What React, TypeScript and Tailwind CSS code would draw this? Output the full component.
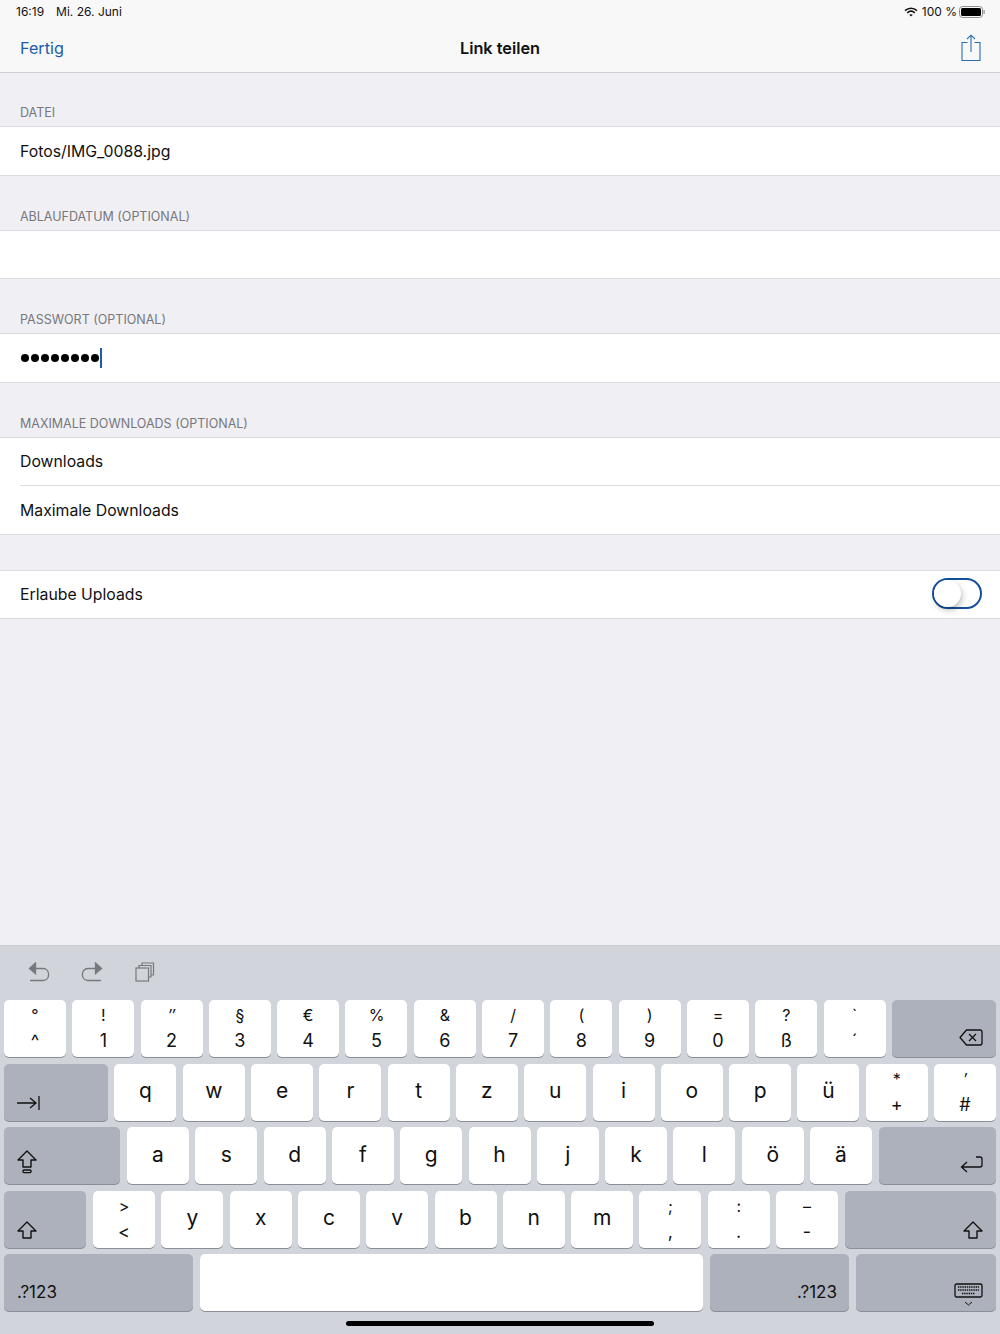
import type { ReactNode } from 'react';

type KeyDef = { top?: string; label: string; slant?: boolean };

const row1: KeyDef[] = [
  { top: '°', label: '^' },
  { top: '!', label: '1' },
  { top: '″', label: '2', slant: true },
  { top: '§', label: '3' },
  { top: '€', label: '4' },
  { top: '%', label: '5' },
  { top: '&', label: '6' },
  { top: '/', label: '7' },
  { top: '(', label: '8' },
  { top: ')', label: '9' },
  { top: '=', label: '0' },
  { top: '?', label: 'ß' },
  { top: '`', label: '´' },
];
const row2: KeyDef[] = [
  ...'qwertzuiopü'.split('').map((label) => ({ label })),
  { top: '*', label: '+' },
  { top: '′', label: '#', slant: true },
];
const row3: KeyDef[] = 'asdfghjklöä'.split('').map((label) => ({ label }));
const row4: KeyDef[] = [
  { top: '>', label: '<' },
  ...'yxcvbnm'.split('').map((label) => ({ label })),
  { top: ';', label: ',' },
  { top: ':', label: '.' },
  { top: '–', label: '-' },
];

function Key({ k }: { k: KeyDef }) {
  return (
    <div className="w-[62px] h-[57px] shrink-0 bg-white rounded-[5px] shadow-[0_1px_0_#8b8e96] text-[#111]">
      {k.top ? (
        <div className="h-full flex flex-col items-center pt-[4px]">
          <span className={`text-[16px] leading-[22px] ${k.slant ? 'italic' : ''}`}>{k.top}</span>
          <span className="text-[18px] leading-[24px] mt-[3px]">{k.label}</span>
        </div>
      ) : (
        <div className="h-full flex items-center justify-center text-[21px] leading-none pb-[3px]">{k.label}</div>
      )}
    </div>
  );
}

function SpecialKey({ width, align, children }: { width: string; align: 'left' | 'right'; children: ReactNode }) {
  return (
    <div
      className={`${width} h-[57px] shrink-0 bg-[#adb1bb] rounded-[5px] shadow-[0_1px_0_#8b8e96] flex items-end text-[#111] ${
        align === 'left' ? 'justify-start pl-[13px]' : 'justify-end pr-[13px]'
      }`}
    >
      {children}
    </div>
  );
}

function ShiftIcon({ lock }: { lock?: boolean }) {
  return (
    <svg
      width="20"
      height="24"
      viewBox="0 0 20 24"
      fill="none"
      stroke="#111"
      strokeWidth="1.4"
      className={lock ? 'mb-[10px]' : 'mb-[3px]'}
    >
      <path d="M10 1 L19 10 H14 V17 H6 V10 H1 Z" strokeLinejoin="round" />
      {lock && <rect x="6" y="20" width="8" height="2.6" rx="1" />}
    </svg>
  );
}

function Section({ title, children }: { title?: string; children: ReactNode }) {
  return (
    <div>
      {title ? (
        <div className="h-[54px] flex items-end px-5 pb-[5px] text-[12.5px] leading-[16px] text-[#77777c]">{title}</div>
      ) : (
        <div className="h-[35px]" />
      )}
      <div className="bg-white border-y border-[#dcdce0]">{children}</div>
    </div>
  );
}

function Row({ children }: { children?: ReactNode }) {
  return <div className="h-[47.5px] flex items-center px-5 text-[15.8px] text-[#111]">{children}</div>;
}

export default function App() {
  return (
    <div className="w-[1000px] h-[1334px] flex flex-col bg-[#efeff4] overflow-hidden font-['Inter','Liberation_Sans',sans-serif]">
      {/* status + nav */}
      <div className="h-[73px] shrink-0 bg-[#f8f8f9] border-b border-[#d0d0d4] relative">
        <div className="h-[24px] flex items-center justify-between pl-4 pr-[15px] text-[12px] text-[#111]">
          <div className="flex gap-[12px]">
            <span>16:19</span>
            <span>Mi. 26. Juni</span>
          </div>
          <div className="flex items-center gap-[4px]">
            <svg width="14" height="10" viewBox="0 0 14 10" fill="none" stroke="#111" strokeWidth="1.6">
              <path d="M1 3.6 C4.5 0.4 9.5 0.4 13 3.6" />
              <path d="M3.2 5.8 C5.4 3.9 8.6 3.9 10.8 5.8" />
              <path d="M7 9.6 L5.2 7.8 C6.2 7 7.8 7 8.8 7.8 Z" fill="#111" stroke="none" />
            </svg>
            <span>100 %</span>
            <svg width="26" height="12" viewBox="0 0 26 12" className="-ml-[2px]">
              <rect x="0.5" y="0.5" width="23" height="11" rx="3" fill="none" stroke="#8e8e92" />
              <rect x="2" y="2" width="20" height="8" rx="1.5" fill="#000" />
              <rect x="24.5" y="4" width="1.2" height="4" rx="0.6" fill="#8e8e92" />
            </svg>
          </div>
        </div>
        <div className="h-[48px] relative flex items-center justify-between pl-5 pr-[19px]">
          <span className="text-[16.2px] text-[#1c5ca8]">Fertig</span>
          <span className="absolute left-0 right-0 text-center text-[16.3px] font-semibold text-[#111]">Link teilen</span>
          <svg width="20" height="28" viewBox="0 0 20 28" fill="none" stroke="#2a6cb3" strokeWidth="1.1" className="-mt-[1px]">
            <path d="M6.5 8.5 H1 V26.5 H19 V8.5 H13.5" />
            <path d="M10 18 V1.5 M6 5 L10 1.2 L14 5" />
          </svg>
        </div>
      </div>

      {/* form */}
      <div className="flex-1 -mt-px">
        <Section title="DATEI">
          <Row>
            <span className="pt-[2px]">Fotos/IMG_0088.jpg</span>
          </Row>
        </Section>
        <Section title="ABLAUFDATUM (OPTIONAL)">
          <Row />
        </Section>
        <Section title="PASSWORT (OPTIONAL)">
          <Row>
            <div className="flex items-center gap-[1.8px] ml-px">
              {[0, 1, 2, 3, 4, 5, 6, 7].map((i) => (
                <span key={i} className="w-[8.2px] h-[8.2px] rounded-full bg-black" />
              ))}
              <span className="w-[2px] h-[20px] bg-[#1c5ca8] -ml-[0.5px]" />
            </div>
          </Row>
        </Section>
        <Section title="MAXIMALE DOWNLOADS (OPTIONAL)">
          <Row>
            <span className="pt-[2px]">Downloads</span>
          </Row>
          <div className="h-px ml-5 bg-[#dcdce0]" />
          <Row>
            <span className="pt-[2px]">Maximale Downloads</span>
          </Row>
        </Section>
        <Section>
          <div className="h-[47.5px] flex items-center justify-between pl-5 pr-[18px] text-[15.8px] text-[#111]">
            <span className="pt-[2px]">Erlaube Uploads</span>
            <div className="w-[50px] h-[31px] -mt-[2px] rounded-full border-[2px] border-[#14509c] bg-white relative">
              <div className="absolute left-0 top-0 w-[27px] h-[27px] rounded-full bg-white shadow-[1px_3px_6px_rgba(0,0,0,0.28)]" />
            </div>
          </div>
        </Section>
      </div>

      {/* keyboard */}
      <div className="h-[389px] shrink-0 bg-[#d1d4da] border-t border-[#c8cad0] flex flex-col">
        <div className="h-[54px] flex items-center pl-[28px] pb-[2px]">
          <svg width="22" height="20" viewBox="0 0 22 20" fill="none" stroke="#77797f" strokeWidth="1.3">
            <path d="M1.5 6.5 H15 C22.5 6.5 22.5 18.5 15 18.5 H2" />
            <path d="M7.5 1 L1.5 6.5 L7.5 11.5 Z" fill="#77797f" />
          </svg>
          <svg width="22" height="20" viewBox="0 0 22 20" fill="none" stroke="#77797f" strokeWidth="1.3" className="ml-[31px]">
            <path d="M20.5 6.5 H7 C-0.5 6.5 -0.5 18.5 7 18.5 H20" />
            <path d="M14.5 1 L20.5 6.5 L14.5 11.5 Z" fill="#77797f" />
          </svg>
          <svg width="20" height="20" viewBox="0 0 20 20" fill="none" stroke="#77797f" strokeWidth="1.2" className="ml-[32px]">
            <rect x="1" y="6" width="12.5" height="13" />
            <path d="M4 6 V3.5 H16 V15 H13.5" />
            <path d="M7 3.5 V1 H18.5 V13 H16" />
          </svg>
        </div>
        <div className="flex flex-col gap-[6.5px] px-1">
          <div className="flex justify-between">
            <div className="flex gap-[6.3px]">
              {row1.map((k) => (
                <Key key={k.label} k={k} />
              ))}
            </div>
            <SpecialKey width="w-[104px]" align="right">
              <svg width="24" height="17" viewBox="0 0 24 17" fill="none" stroke="#111" strokeWidth="1.3" className="mb-[11px]">
                <path d="M7.5 1 H21 A2 2 0 0 1 23 3 V14 A2 2 0 0 1 21 16 H7.5 L1 8.5 Z" strokeLinejoin="round" />
                <path d="M10 5 L17 12 M17 5 L10 12" />
              </svg>
            </SpecialKey>
          </div>
          <div className="flex justify-between">
            <SpecialKey width="w-[104px]" align="left">
              <svg width="23" height="14" viewBox="0 0 23 14" fill="none" stroke="#111" strokeWidth="1.3" className="mb-[11px]">
                <path d="M0 7 H19 M13 2 L19 7 L13 12" />
                <path d="M22 0 V14" />
              </svg>
            </SpecialKey>
            <div className="flex gap-[6.3px]">
              {row2.map((k) => (
                <Key key={k.label} k={k} />
              ))}
            </div>
          </div>
          <div className="flex justify-between">
            <SpecialKey width="w-[116px]" align="left">
              <ShiftIcon lock />
            </SpecialKey>
            <div className="flex gap-[6.3px]">
              {row3.map((k) => (
                <Key key={k.label} k={k} />
              ))}
            </div>
            <SpecialKey width="w-[117px]" align="right">
              <svg width="23" height="17" viewBox="0 0 23 17" fill="none" stroke="#111" strokeWidth="1.3" className="mb-[11px]">
                <path d="M16 1 H20 A2 2 0 0 1 22 3 V9 A2 2 0 0 1 20 11 H1.5 M7 6 L1.5 11 L7 16" />
              </svg>
            </SpecialKey>
          </div>
          <div className="flex justify-between">
            <SpecialKey width="w-[82px]" align="left">
              <ShiftIcon />
            </SpecialKey>
            <div className="flex gap-[6.3px]">
              {row4.map((k) => (
                <Key key={k.label} k={k} />
              ))}
            </div>
            <SpecialKey width="w-[151px]" align="right">
              <ShiftIcon />
            </SpecialKey>
          </div>
          <div className="flex gap-[7px]">
            <SpecialKey width="w-[189px]" align="left">
              <span className="text-[17px] leading-none mb-[10px]">.?123</span>
            </SpecialKey>
            <div className="w-[503px] h-[57px] shrink-0 bg-white rounded-[5px] shadow-[0_1px_0_#8b8e96]" />
            <SpecialKey width="w-[139px]" align="right">
              <span className="text-[17px] leading-none mb-[10px] -mr-px">.?123</span>
            </SpecialKey>
            <SpecialKey width="w-[140px]" align="right">
              <svg width="30" height="24" viewBox="0 0 30 24" fill="none" stroke="#111" className="mb-[4px] -mr-px">
                <rect x="1" y="1" width="27" height="13" rx="1.5" strokeWidth="1.3" />
                <path d="M4 4 H25 M4 7 H25 M8 10.5 H21" strokeWidth="1.6" strokeDasharray="1.4 0.8" />
                <path d="M11 19 L14.5 22 L18 19" strokeWidth="1" />
              </svg>
            </SpecialKey>
          </div>
        </div>
        <div className="flex-1 flex justify-center items-start pt-[10px]">
          <div className="w-[308px] h-[5px] rounded-full bg-black" />
        </div>
      </div>
    </div>
  );
}
